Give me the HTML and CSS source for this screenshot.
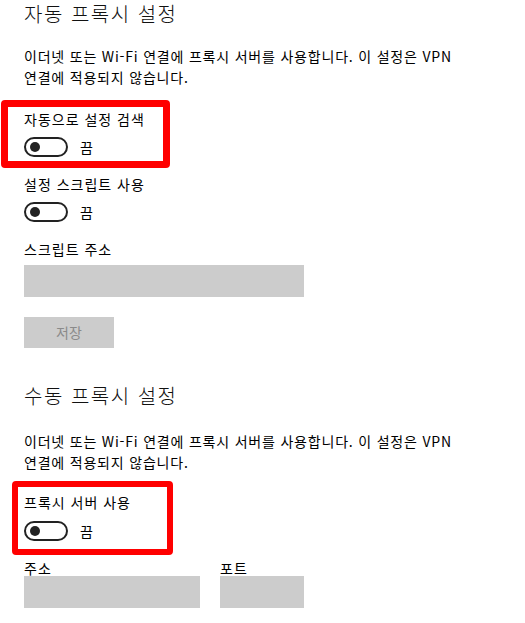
FILE: index.html
```html
<!DOCTYPE html>
<html lang="ko">
<head>
<meta charset="utf-8">
<link rel="stylesheet" href="styles.css">
</head>
<body>
<div class="page">
  <section class="section">
    <h2 class="title">자동 프록시 설정</h2>
    <p class="desc">이더넷 또는 Wi-Fi 연결에 프록시 서버를 사용합니다. 이 설정은 VPN<br>연결에 적용되지 않습니다.</p>

    <div class="highlight highlight-auto">
      <div class="label">자동으로 설정 검색</div>
      <div class="toggle-row"><span class="toggle"><span class="knob"></span></span><span class="state">끔</span></div>
    </div>

    <div class="label label-script">설정 스크립트 사용</div>
    <div class="toggle-row"><span class="toggle"><span class="knob"></span></span><span class="state">끔</span></div>

    <div class="label label-addr">스크립트 주소</div>
    <div class="input input-script"></div>
    <div class="button">저장</div>
  </section>

  <section class="section section-manual">
    <h2 class="title">수동 프록시 설정</h2>
    <p class="desc desc-manual">이더넷 또는 Wi-Fi 연결에 프록시 서버를 사용합니다. 이 설정은 VPN<br>연결에 적용되지 않습니다.</p>

    <div class="highlight highlight-manual">
      <div class="label">프록시 서버 사용</div>
      <div class="toggle-row"><span class="toggle"><span class="knob"></span></span><span class="state">끔</span></div>
    </div>

    <div class="fields">
      <div class="field">
        <div class="field-label">주소</div>
        <div class="input input-address"></div>
      </div>
      <div class="field">
        <div class="field-label">포트</div>
        <div class="input input-port"></div>
      </div>
    </div>
  </section>
</div>
</body>
</html>
```

FILE: styles.css
```css
html, body {
  margin: 0;
  padding: 0;
  background: #ffffff;
}

body {
  font-family: "Noto Sans CJK KR", "Noto Sans", sans-serif;
  color: #000000;
  font-size: 14px;
}

.page {
  padding-left: 24px;
}

.section {
  display: flex;
  flex-direction: column;
  align-items: flex-start;
}

.section-manual {
  margin-top: 34px;
}

.title {
  margin: 0;
  font-size: 20px;
  font-weight: 300;
  line-height: 28px;
  letter-spacing: 1.5px;
  color: #111111;
}

.desc {
  margin: 18px 0 0 0;
  font-size: 14px;
  line-height: 21px;
  letter-spacing: 0.8px;
}

.desc-manual {
  margin-top: 21px;
}

.label {
  font-size: 14px;
  line-height: 20px;
  letter-spacing: 1px;
}

.highlight {
  border: 7px solid #ff0000;
  border-radius: 4px;
  box-sizing: border-box;
}

.highlight-auto {
  margin-top: 12px;
  margin-left: -23px;
  padding: 2px 0 4px 16px;
  width: 169px;
}

.highlight-manual {
  margin-top: 8px;
  margin-left: -12px;
  border-width: 6px;
  padding: 5px 0 8px 6px;
  width: 161px;
}

.toggle-row {
  display: flex;
  align-items: center;
  margin-top: 8px;
  height: 20px;
}

.highlight-manual .toggle-row {
  margin-top: 9px;
}

.toggle {
  box-sizing: border-box;
  width: 44px;
  height: 20px;
  border: 2px solid #222222;
  border-radius: 10px;
  display: flex;
  align-items: center;
  padding-left: 4px;
}

.knob {
  width: 10px;
  height: 10px;
  border-radius: 50%;
  background: #222222;
}

.state {
  margin-left: 12px;
  font-size: 14px;
  line-height: 20px;
}

.label-script {
  margin-top: 6px;
}

.label-addr {
  margin-top: 17px;
}

.input {
  background: #cccccc;
  height: 32px;
}

.input-script {
  margin-top: 6px;
  width: 280px;
}

.button {
  margin-top: 20px;
  width: 90px;
  height: 31px;
  background: #cccccc;
  color: #8a8a8a;
  font-size: 14px;
  line-height: 31px;
  text-align: center;
}

.fields {
  display: flex;
  gap: 20px;
  margin-top: 5px;
}

.field-label {
  font-size: 14px;
  line-height: 16px;
  letter-spacing: 1px;
}

.input-address {
  width: 176px;
}

.input-port {
  width: 84px;
}
```
